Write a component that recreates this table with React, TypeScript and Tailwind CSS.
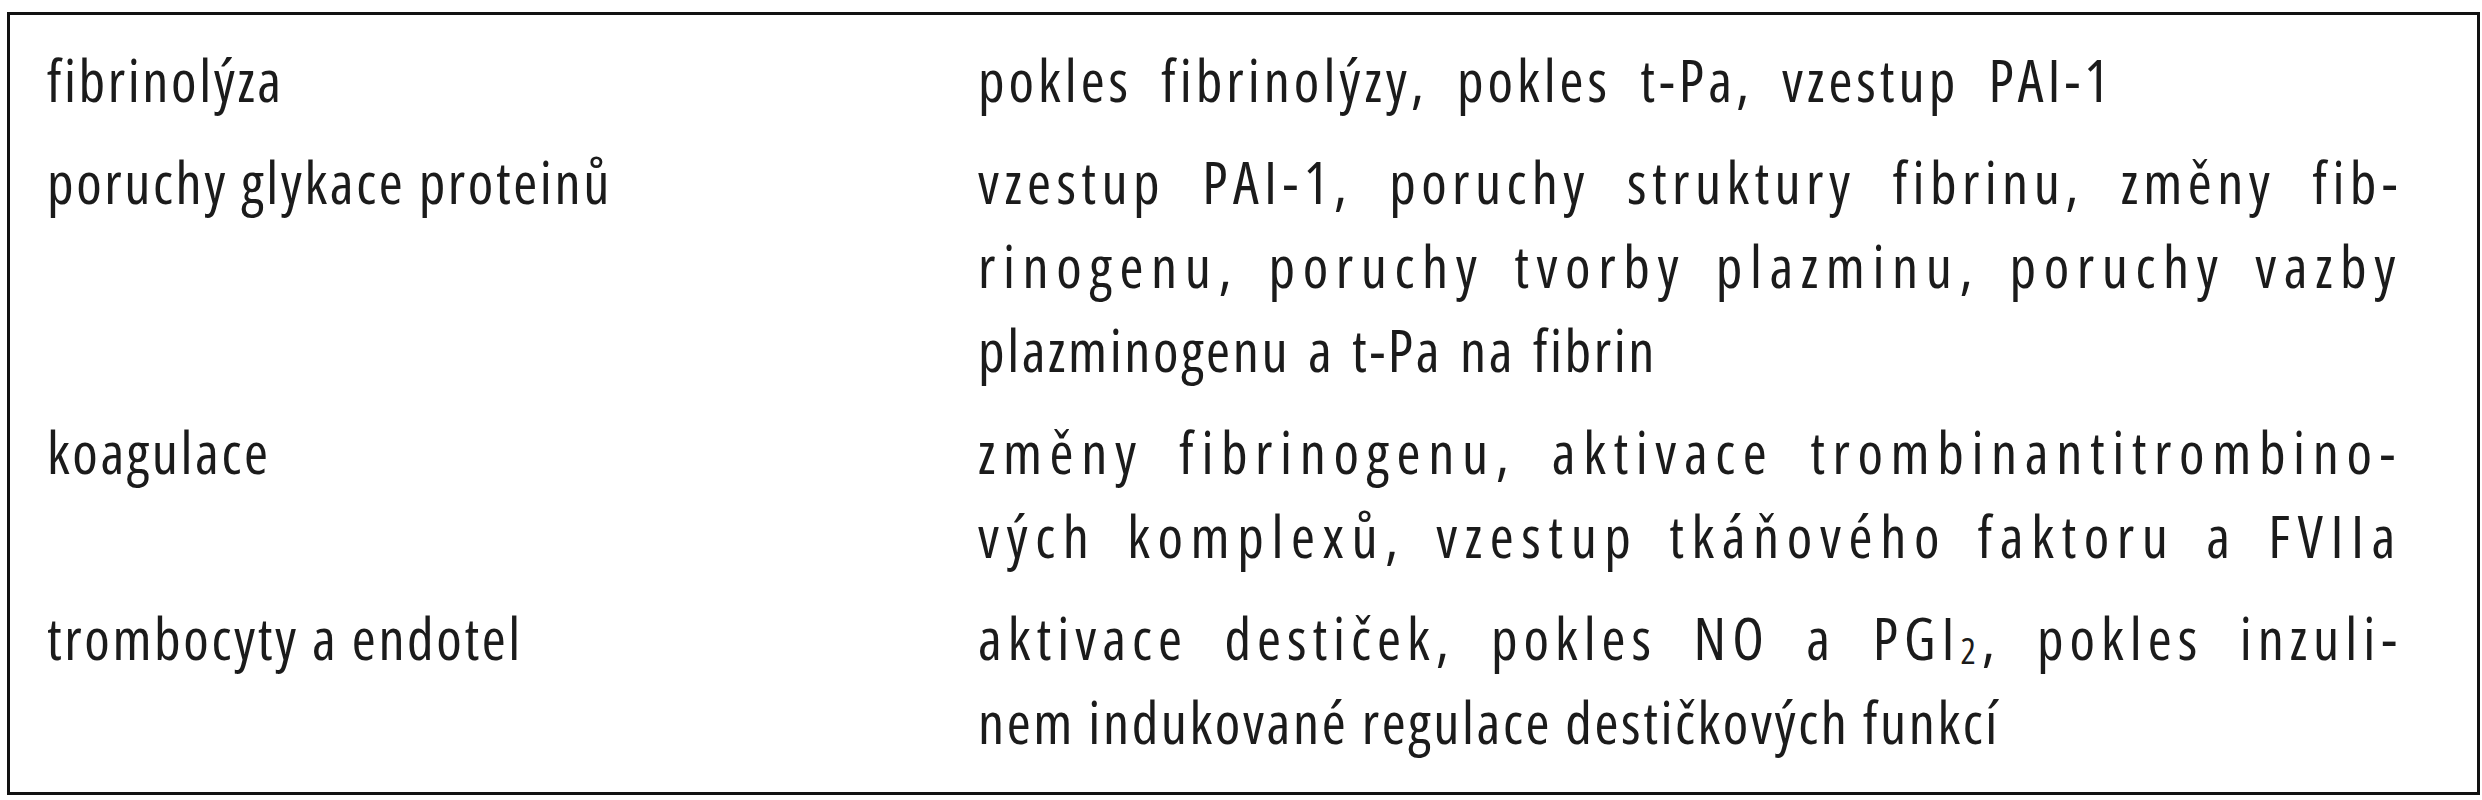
import React from "react";

type Line = { content: React.ReactNode; cls: string };
type Row = { label: string; lines: Line[] };

const J = "text-justify [text-align-last:justify] whitespace-nowrap";

const rows: Row[] = [
  {
    label: "fibrinolýza",
    lines: [{ content: "pokles fibrinolýzy, pokles t-Pa, vzestup PAI-1", cls: `${J} w-[1135px] tracking-[4px]` }],
  },
  {
    label: "poruchy glykace proteinů",
    lines: [
      { content: "vzestup PAI-1, poruchy struktury fibrinu, změny fib-", cls: `${J} w-[1425px] tracking-[5.4px]` },
      { content: "rinogenu, poruchy tvorby plazminu, poruchy vazby", cls: `${J} w-[1425px] tracking-[7.6px]` },
      { content: "plazminogenu a t-Pa na fibrin", cls: `${J} w-[679px] tracking-[2.6px]` },
    ],
  },
  {
    label: "koagulace",
    lines: [
      { content: "změny fibrinogenu, aktivace trombinantitrombino-", cls: `${J} w-[1425px] tracking-[7.6px]` },
      { content: "vých komplexů, vzestup tkáňového faktoru a FVIIa", cls: `${J} w-[1425px] tracking-[7.6px]` },
    ],
  },
  {
    label: "trombocyty a endotel",
    lines: [
      {
        content: (
          <>
            aktivace destiček, pokles NO a PGI
            <sub className="text-[0.62em] relative top-[0.12em]">2</sub>, pokles inzuli-
          </>
        ),
        cls: `${J} w-[1425px] tracking-[6px]`,
      },
      { content: "nem indukované regulace destičkových funkcí", cls: `${J} w-[1020px] tracking-[2.6px]` },
    ],
  },
];

export default function App() {
  return (
    <div className="bg-white w-[2482px] h-[800px] pt-[12px] pl-[7px]">
      <div className="w-[2473px] h-[783px] border-[3px] border-[#111] pl-[37px] pt-[23px] font-['Open_Sans',sans-serif] [font-stretch:85%] text-[58px] leading-[84px] tracking-[2.6px] text-[#1b1b1b] flex flex-col gap-[18px]">
        {rows.map((r, i) => (
          <div key={i} className="flex">
            <div className="w-[931px] shrink-0">{r.label}</div>
            <div className="w-[1425px] shrink-0">
              {r.lines.map((l, j) => (
                <div key={j} className={l.cls}>
                  {l.content}
                </div>
              ))}
            </div>
          </div>
        ))}
      </div>
    </div>
  );
}
